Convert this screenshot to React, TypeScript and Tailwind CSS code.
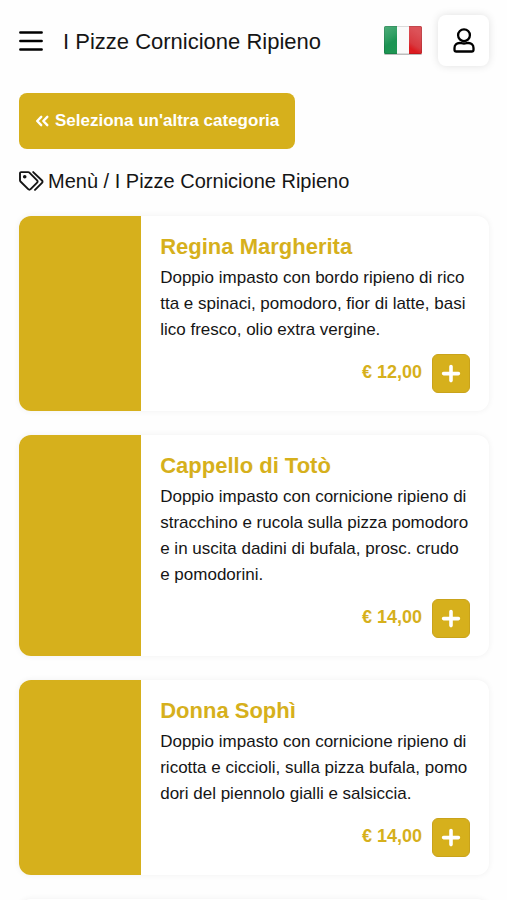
import React from "react";

interface Pizza {
  name: string;
  description: string[];
  price: string;
}

const pizzas: Pizza[] = [
  {
    name: "Regina Margherita",
    description: [
      "Doppio impasto con bordo ripieno di rico",
      "tta e spinaci, pomodoro, fior di latte, basi",
      "lico fresco, olio extra vergine.",
    ],
    price: "€ 12,00",
  },
  {
    name: "Cappello di Totò",
    description: [
      "Doppio impasto con cornicione ripieno di",
      "stracchino e rucola sulla pizza pomodoro",
      "e in uscita dadini di bufala, prosc. crudo",
      "e pomodorini.",
    ],
    price: "€ 14,00",
  },
  {
    name: "Donna Sophì",
    description: [
      "Doppio impasto con cornicione ripieno di",
      "ricotta e ciccioli, sulla pizza bufala, pomo",
      "dori del piennolo gialli e salsiccia.",
    ],
    price: "€ 14,00",
  },
];

const BarsIcon = () => (
  <svg viewBox="0 0 24 21" className="h-[21px] w-6" stroke="currentColor" strokeWidth="2.4" strokeLinecap="round" aria-hidden="true">
    <path d="M1.300 2.500h21.400M1.300 11h21.400M1.300 19.500h21.400" />
  </svg>
);

const UserIcon = () => (
  <svg viewBox="0 0 22 25" className="h-[25px] w-[22px]" fill="none" stroke="currentColor" strokeWidth="2.3" strokeLinejoin="round" aria-hidden="true">
    <circle cx="11" cy="7.200" r="5.900" />
    <path d="M6.600 15c1.500 0 2.300.5 4.400.5s2.900-.5 4.400-.5c3 0 5.100 2 5.100 4.900v1.800c0 1.100-.8 1.800-1.800 1.800H3.300c-1 0-1.800-.7-1.800-1.800v-1.800c0-2.900 2.100-4.900 5.100-4.900z" />
  </svg>
);

const TagsIcon = () => (
  <svg viewBox="0 0 25 20" className="h-5 w-[25px]" fill="none" stroke="currentColor" strokeWidth="1.900" strokeLinecap="round" strokeLinejoin="round" aria-hidden="true">
    <path d="M1 2.200v7.100c0 .5.200.9.500 1.200l7.700 7.700c.7.7 1.700.7 2.400 0l6.500-6.500c.7-.7.7-1.700 0-2.400l-7.700-7.700c-.3-.3-.8-.5-1.200-.5H2.100C1.500 1.100 1 1.600 1 2.200z" />
    <path d="M14.200 1.100l8.800 8.400c.7.700.7 1.700 0 2.400l-7 7" />
    <circle cx="5.700" cy="5.800" r="1.800" fill="currentColor" stroke="none" />
  </svg>
);

const ChevronsIcon = () => (
  <svg viewBox="0 0 14 12" className="h-3 w-3.5" fill="none" stroke="currentColor" strokeWidth="2.400" strokeLinecap="round" strokeLinejoin="round" aria-hidden="true">
    <path d="M6.200 1.800L2.200 6l4 4.200M12.300 1.800L8.300 6l4 4.200" />
  </svg>
);

const PlusIcon = () => (
  <svg viewBox="0 0 20 20" className="h-5 w-5" stroke="currentColor" strokeWidth="3.600" strokeLinecap="round" aria-hidden="true">
    <path d="M10 2.600v14M2.600 9.600h14.800" />
  </svg>
);

const ItalianFlag = () => (
  <svg viewBox="0 0 38 29" className="h-[29px] w-[38px]" aria-hidden="true">
    <defs>
      <linearGradient id="green" x1="0" y1="0" x2="0.3" y2="1">
        <stop offset="0" stopColor="#4fae7b" />
        <stop offset="0.5" stopColor="#2f9d62" />
        <stop offset="0.7" stopColor="#1c9353" />
        <stop offset="1" stopColor="#1d9552" />
      </linearGradient>
      <linearGradient id="red" x1="0" y1="0" x2="-0.3" y2="1">
        <stop offset="0" stopColor="#dc5258" />
        <stop offset="0.5" stopColor="#d83a40" />
        <stop offset="0.7" stopColor="#dc1b20" />
        <stop offset="1" stopColor="#e01f24" />
      </linearGradient>
    </defs>
    <rect x="0" y="1" width="38" height="28" rx="1.500" fill="#bdbdbd" />
    <rect x="0" y="0" width="38" height="28" rx="1.500" fill="#fafafa" />
    <path d="M1.500 0H13v28H1.500A1.500 1.500 0 0 1 0 26.500v-25A1.500 1.500 0 0 1 1.500 0z" fill="url(#green)" />
    <path d="M25 0h11.500A1.500 1.500 0 0 1 38 1.500v25a1.500 1.500 0 0 1-1.500 1.500H25z" fill="url(#red)" />
    <rect x="0.500" y="0.500" width="37" height="27" rx="1.200" fill="none" stroke="#000" strokeOpacity="0.12" />
  </svg>
);

const PizzaCard: React.FC<{ pizza: Pizza }> = ({ pizza }) => (
  <article className="flex shrink-0 overflow-hidden rounded-xl bg-white shadow-[0_0_6px_rgba(0,0,0,0.06)]">
    <div className="w-[26%] shrink-0 bg-[#d6b01c]" />
    <div className="min-w-0 flex-1 px-[19px] pt-[19px] pb-[18px]">
      <h2 className="text-[22px] leading-6 font-bold text-[#d6b01c]">
        {pizza.name}
      </h2>
      <p className="mt-1.5 text-[17px] leading-[26px] whitespace-pre-line">
        {pizza.description.join("\n")}
      </p>
      <div className="mt-[11px] flex items-center justify-end gap-2.5">
        <span className="pb-1 text-[18px] leading-6 font-bold text-[#d6b01c]">
          {pizza.price}
        </span>
        <button
          aria-label={`Aggiungi ${pizza.name}`}
          className="flex h-[39px] w-[38px] items-center justify-center rounded-md border border-[#c9a31b] bg-[#d6b01c] text-white"
        >
          <PlusIcon />
        </button>
      </div>
    </div>
  </article>
);

export default function App() {
  return (
    <div className="flex h-screen flex-col overflow-hidden bg-[#fefefe] pt-[15px] pr-[18px] pl-[19px] font-['Liberation_Sans',Arial,sans-serif] text-[#151515]">
      {/* Top bar */}
      <header className="flex shrink-0 items-center">
        <button aria-label="Apri menu" className="text-black">
          <BarsIcon />
        </button>
        <h1 className="ml-5 flex-1 pt-0.5 text-[22px] leading-8">
          I Pizze Cornicione Ripieno
        </h1>
        <button aria-label="Italiano">
          <ItalianFlag />
        </button>
        <button
          aria-label="Profilo"
          className="ml-4 flex h-[51px] w-[51px] items-center justify-center rounded-lg bg-white text-black shadow-[0_0_8px_rgba(0,0,0,0.12)]"
        >
          <UserIcon />
        </button>
      </header>

      {/* Back to categories */}
      <button className="mt-[27px] flex h-14 shrink-0 items-center gap-1.5 self-start rounded-lg bg-[#d6b01c] px-4 text-[17px] font-bold text-white">
        <ChevronsIcon />
        Seleziona un'altra categoria
      </button>

      {/* Breadcrumb */}
      <nav className="mt-5 flex shrink-0 items-center gap-1 text-[20px] leading-6">
        <TagsIcon />
        <span>Menù / I Pizze Cornicione Ripieno</span>
      </nav>

      {/* Products */}
      <main className="mt-[23px] flex min-h-0 flex-1 flex-col gap-6">
        {pizzas.map((pizza) => (
          <PizzaCard key={pizza.name} pizza={pizza} />
        ))}
        {/* Next product, still loading */}
        <div className="h-[195px] shrink-0 rounded-xl bg-white shadow-[0_0_6px_rgba(0,0,0,0.06)]" />
      </main>
    </div>
  );
}
